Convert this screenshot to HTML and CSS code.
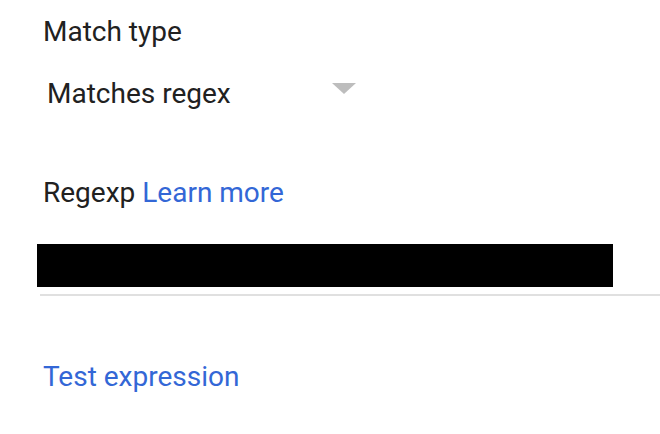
FILE: index.html
```html
<!DOCTYPE html>
<html>
<head>
<meta charset="utf-8">
<link rel="stylesheet" href="styles.css">
</head>
<body>
<div class="form">
  <div class="label">Match type</div>
  <div class="select">
    <span class="select-value">Matches regex</span>
    <span class="arrow"></span>
  </div>
  <div class="label regexp-label">Regexp <a class="link" href="#">Learn more</a></div>
  <div class="field">
    <div class="redacted"></div>
    <div class="underline"></div>
  </div>
  <a class="link test" href="#">Test expression</a>
</div>
</body>
</html>
```
FILE: styles.css
```css
html, body {
  margin: 0;
  padding: 0;
  background: #ffffff;
}
body {
  font-family: Roboto, "Noto Sans", sans-serif;
  color: #212121;
  width: 660px;
  height: 434px;
  overflow: hidden;
}
.form {
  display: flex;
  flex-direction: column;
  align-items: flex-start;
  padding: 16px 0 0 43px;
}
.label {
  font-size: 28px;
  line-height: 32px;
}
.select {
  display: flex;
  align-items: center;
  justify-content: space-between;
  width: 309px;
  margin-top: 30px;
  margin-left: 4px;
  font-size: 28px;
  line-height: 32px;
}
.arrow {
  width: 0;
  height: 0;
  border-left: 12px solid transparent;
  border-right: 12px solid transparent;
  border-top: 11px solid #bdbdbd;
  margin-top: -12px;
}
.regexp-label {
  margin-top: 67px;
}
.link {
  color: #3367d6;
  text-decoration: none;
}
.field {
  margin-top: 35px;
  margin-left: -6px;
  width: 623px;
}
.redacted {
  width: 576px;
  height: 43px;
  background: #000;
}
.underline {
  height: 2px;
  background: #e0e0e0;
  margin-top: 7px;
  margin-left: 3px;
}
.test {
  font-size: 28px;
  line-height: 32px;
  margin-top: 65px;
}
```
